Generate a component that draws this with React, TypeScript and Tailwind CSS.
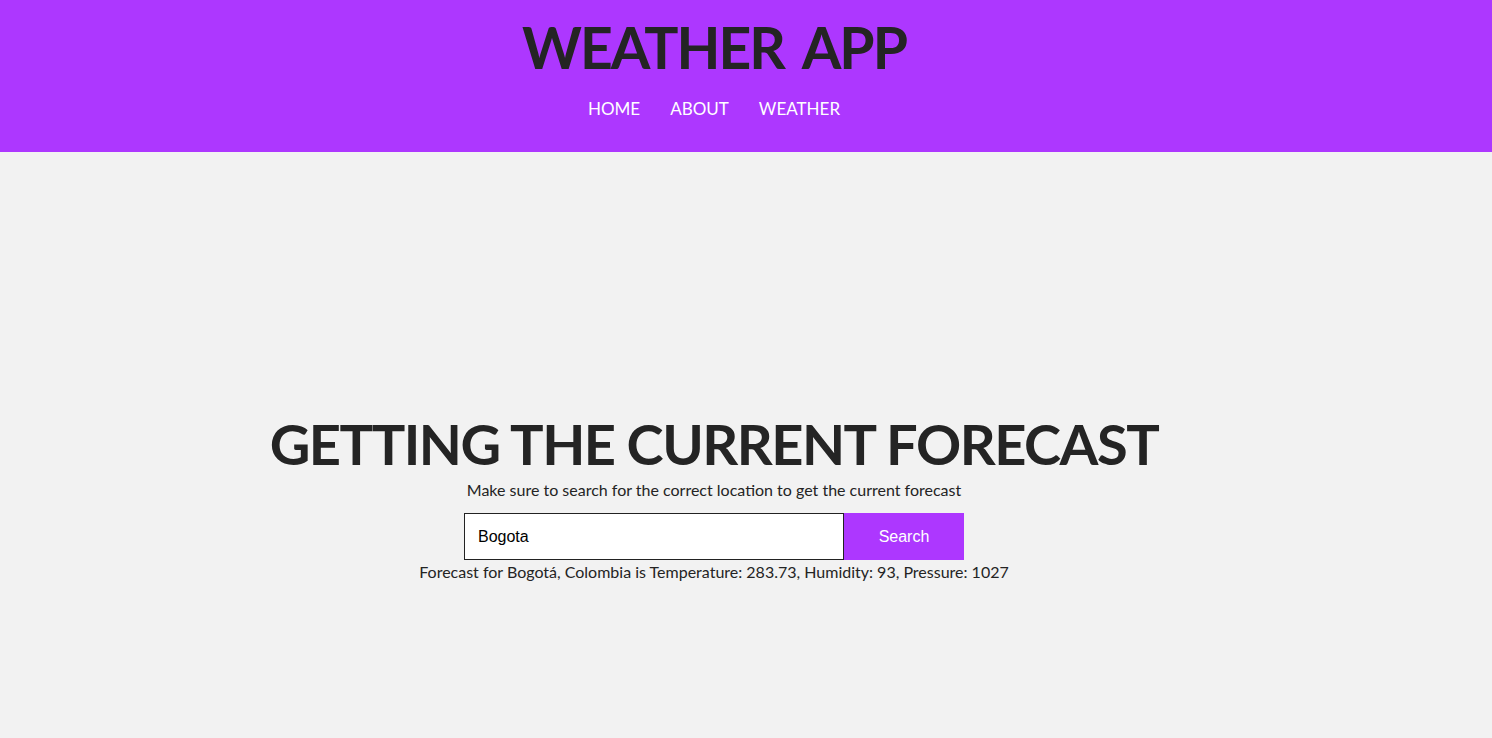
import React from "react";

export default function App() {
  const cal = { fontFamily: "Lato, 'Open Sans', sans-serif" };
  return (
    <div className="min-h-[738px] bg-[#f2f2f2] text-[#242424]" style={cal}>
      <header className="h-[152px] bg-[#ad37ff] flex flex-col items-center pr-[64px]">
        <h1 className="mt-[13px] text-[57px] leading-[68px] font-bold tracking-[-2px] [word-spacing:8px] text-[#242424]">WEATHER APP</h1>
        <nav className="mt-[16px] flex gap-[30px] text-[17px] leading-[24px] text-white">
          <a>HOME</a>
          <a>ABOUT</a>
          <a>WEATHER</a>
        </nav>
      </header>
      <main className="flex flex-col items-center pr-[64px] pt-[258px]">
        <h2 className="text-[56px] leading-[68px] font-bold tracking-[-1.5px]">GETTING THE CURRENT FORECAST</h2>
        <p className="text-[16px] leading-[20px] mt-[2px]">Make sure to search for the correct location to get the current forecast</p>
        <div className="mt-[13px] flex">
          <input
            className="w-[380px] h-[47px] border border-[#222] bg-white px-[13px] text-[16px] text-black outline-none"
            style={{ fontFamily: "'Liberation Sans', Arial, sans-serif" }}
            defaultValue="Bogota"
          />
          <button
            className="w-[120px] h-[47px] bg-[#ad37ff] text-white text-[16px]"
            style={{ fontFamily: "'Liberation Sans', Arial, sans-serif" }}
          >
            Search
          </button>
        </div>
        <p className="text-[16px] leading-[20px] mt-[2px]">Forecast for Bogotá, Colombia is Temperature: 283.73, Humidity: 93, Pressure: 1027</p>
      </main>
    </div>
  );
}
